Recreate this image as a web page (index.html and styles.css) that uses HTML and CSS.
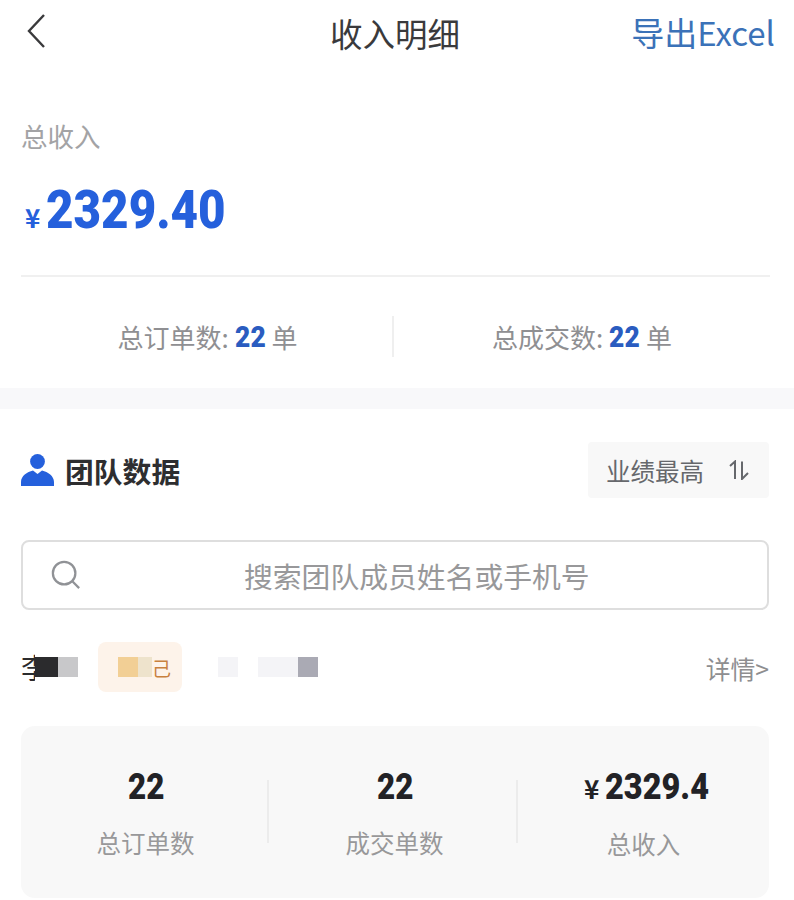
FILE: index.html
```html
<!DOCTYPE html>
<html lang="zh-CN">
<head>
    <meta charset="UTF-8">
    <meta name="viewport" content="width=device-width, initial-scale=1.0">
    <title>收入明细</title>
    <link rel="stylesheet" href="styles.css">
</head>
<body>
    <!-- 顶部导航 -->
    <header class="nav">
        <svg class="nav-back" width="18" height="34" viewBox="0 0 18 34"><path d="M17 1 L2 17 L17 33" fill="none" stroke="#3a3a3c" stroke-width="2.4"/></svg>
        <h1 class="nav-title">收入明细</h1>
        <a class="nav-export">导出Excel</a>
    </header>

    <!-- 总收入 -->
    <section class="income">
        <p class="income-label">总收入</p>
        <p class="income-amount"><span class="income-yen">¥</span><span class="income-num">2329.40</span></p>
    </section>

    <div class="totals">
        <div class="totals-item">总订单数: <b>22</b> 单</div>
        <div class="totals-item">总成交数: <b>22</b> 单</div>
    </div>

    <div class="band"></div>

    <!-- 团队数据 -->
    <section class="team">
        <div class="team-head">
            <h2 class="team-title">
                <svg width="33" height="32" viewBox="0 0 33 32"><circle cx="16.5" cy="7.5" r="7.4" fill="#2560dc"/><path d="M0 32 V28 C0 22 6 18 12 16.5 L16.5 20 L21 16.5 C27 18 33 22 33 28 V32 Z" fill="#2560dc"/></svg>
                团队数据
            </h2>
            <div class="sort">业绩最高
                <svg width="22" height="20" viewBox="0 0 22 20"><path d="M2 6 L7 1.5 V19 M14 1.5 V19 L20 13" fill="none" stroke="#66686c" stroke-width="2"/></svg>
            </div>
        </div>

        <div class="search">
            <svg width="30" height="30" viewBox="0 0 32 32"><circle cx="14" cy="14" r="12" fill="none" stroke="#909296" stroke-width="2.4"/><path d="M23 23 L30 30" stroke="#909296" stroke-width="2.4"/></svg>
            <span class="search-text">搜索团队成员姓名或手机号</span>
        </div>

        <div class="member">
            <div class="mosaic">
                <span class="m-name">李</span>
                <span class="m-dark"></span>
                <span class="m-grey"></span>
                <span class="m-tag"><i class="m-orange"></i><i class="m-cream"></i><em>己</em></span>
                <span class="m-faint"></span>
                <span class="m-faint m-wide"></span>
                <span class="m-slate"></span>
            </div>
            <a class="member-link">详情&gt;</a>
        </div>

        <div class="stats">
            <div class="stats-col">
                <div class="stats-num"><span>22</span></div>
                <div class="stats-label">总订单数</div>
            </div>
            <div class="stats-col">
                <div class="stats-num"><span>22</span></div>
                <div class="stats-label">成交单数</div>
            </div>
            <div class="stats-col">
                <div class="stats-num"><small>¥</small><span class="stats-money">2329.4</span></div>
                <div class="stats-label">总收入</div>
            </div>
        </div>
    </section>
</body>
</html>
```

FILE: styles.css
```css
* {
    padding: 0;
    margin: 0;
    box-sizing: border-box;
    font-family: "Noto Sans CJK SC", "Liberation Sans", sans-serif;
}

body {
    width: 794px;
    height: 900px;
    overflow: hidden;
    background-color: #fff;
}

.nav {
    height: 68px;
    padding: 0 19px 4px 15px;
    display: grid;
    grid-template-columns: 1fr auto 1fr;
    align-items: center;
}

.nav-back {
    margin: 0 0 2px 12px;
}

.nav-title {
    font-size: 32.5px;
    font-weight: 400;
    color: #3a3a3c;
}

.nav-export {
    justify-self: end;
    font-size: 33px;
    color: #3b72b8;
    white-space: nowrap;
}

.income {
    margin: 0 24px 0 21px;
    height: 209px;
    padding-top: 50px;
    border-bottom: 2px solid #f0f0f0;
}

.income-label {
    font-size: 26.5px;
    line-height: 36px;
    color: #a3a3a5;
}

.income-amount {
    margin-top: 21px;
    display: flex;
    align-items: baseline;
    color: #2560dc;
    font-weight: 700;
}

.income-yen {
    font-size: 26px;
    margin: 0 6px 0 4px;
}

/* la fuente no trae digitos estrechos, se comprimen con scaleX */
.income-num {
    font-family: "Roboto", sans-serif;
    font-size: 54px;
    font-weight: 900;
    line-height: 70px;
    transform: scaleX(0.88);
    transform-origin: left center;
}

.totals {
    height: 111px;
    margin: 0 24px 0 21px;
    padding-top: 8px;
    display: flex;
    align-items: center;
}

.totals-item {
    flex: 1;
    height: 41px;
    display: flex;
    align-items: center;
    justify-content: center;
    gap: 4px;
    font-size: 26px;
    color: #8f8f92;
}

.totals-item:first-child {
    flex: none;
    width: 373px;
    padding-left: 2px;
    border-right: 2px solid #efefef;
}

.totals-item b {
    font-family: "Roboto", sans-serif;
    font-size: 30px;
    font-weight: 900;
    color: #2a5cc0;
    transform: scaleX(0.88);
}

.band {
    height: 21px;
    background-color: #f8f8fa;
}

.team {
    padding: 33px 25px 0 21px;
}

.team-head {
    display: flex;
    align-items: center;
    justify-content: space-between;
}

.team-title {
    display: flex;
    align-items: center;
    gap: 11px;
    font-size: 28.8px;
    font-weight: 700;
    color: #2e2e30;
}

.sort {
    width: 181px;
    height: 56px;
    padding-left: 18px;
    display: flex;
    align-items: center;
    gap: 24px;
    background-color: #f8f8f8;
    border-radius: 4px;
    font-size: 24.5px;
    color: #66686c;
}

.search {
    margin-top: 42px;
    height: 70px;
    padding-left: 28px;
    display: flex;
    align-items: center;
    border: 2px solid #dedede;
    border-radius: 8px;
}

.search-text {
    margin-left: 163px;
    font-size: 28.8px;
    color: #98989a;
    white-space: nowrap;
}

.member {
    height: 116px;
    display: flex;
    align-items: center;
    justify-content: space-between;
}

.mosaic {
    display: flex;
    align-items: center;
    height: 50px;
    margin-bottom: 2px;
    position: relative;
    padding-left: 14px;
}

.mosaic span {
    display: block;
    height: 20px;
}

.mosaic .m-name {
    position: absolute;
    left: 0;
    top: 4px;
    height: 42px;
    font-size: 28px;
    line-height: 42px;
    color: #2b2b2d;
}

/* tapa el resto del nombre, como el mosaico de la captura */
.mosaic .m-dark {
    width: 23px;
    background-color: #2b2b2d;
    box-shadow: 0 -12px 0 #fff, 0 12px 0 #fff;
    position: relative;
}

.mosaic .m-grey {
    width: 20px;
    background-color: #c8c8ca;
    margin-right: 20px;
}

.mosaic .m-tag {
    width: 84px;
    height: 50px;
    display: flex;
    align-items: center;
    padding-left: 20px;
    background-color: #fdf3ea;
    border-radius: 8px;
    margin-right: 36px;
}

.m-tag i {
    display: block;
    width: 20px;
    height: 20px;
}

.m-tag .m-cream {
    width: 14px;
}

.m-tag em {
    font-style: normal;
    font-size: 19px;
    color: #c8803e;
}

.m-orange {
    background-color: #f2cf95;
}

.m-cream {
    background-color: #eee3cc;
}

.mosaic .m-faint {
    width: 20px;
    background-color: #f4f4f7;
    margin-right: 20px;
}

.mosaic .m-wide {
    width: 40px;
    margin-right: 0;
}

.mosaic .m-slate {
    width: 20px;
    background-color: #aaaab4;
}

.member-link {
    font-size: 24.8px;
    color: #8e8e90;
}

.stats {
    height: 172px;
    padding-top: 40px;
    display: flex;
    align-items: flex-start;
    background-color: #f8f8f8;
    border-radius: 14px;
}

.stats-col {
    width: 249px;
    text-align: center;
}

.stats-col + .stats-col {
    position: relative;
}

.stats-col + .stats-col::before {
    content: "";
    position: absolute;
    left: -3px;
    top: 14px;
    width: 2px;
    height: 63px;
    background-color: #ececec;
}

.stats-num {
    font-size: 36.5px;
    font-weight: 700;
    line-height: 36px;
    color: #222226;
    padding-left: 1px;
}

.stats-num span {
    display: inline-block;
    font-family: "Roboto", sans-serif;
    font-weight: 900;
    transform: scaleX(0.86);
}

.stats-num .stats-money {
    margin-right: -18px;
    transform: scaleX(0.89);
    transform-origin: left center;
}

.stats-num small {
    font-size: 26px;
    margin-right: 6px;
}

.stats-label {
    margin-top: 20px;
    font-size: 24.5px;
    line-height: 36px;
    color: #98989a;
}
```
